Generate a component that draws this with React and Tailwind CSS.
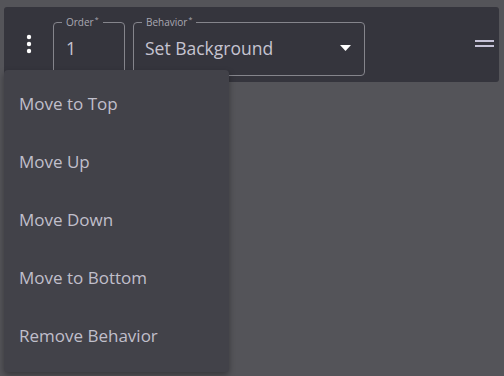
import React from 'react';

const menuItems = ['Move to Top', 'Move Up', 'Move Down', 'Move to Bottom', 'Remove Behavior'];

const font = { fontFamily: '"Open Sans", "Liberation Sans", sans-serif' };

const App = () => {
    return (
        <div className="relative w-[504px] h-[376px] overflow-hidden bg-[#545459] pt-[7px] pl-[4px]" style={font}>
            {/* behavior row */}
            <div className="flex items-start w-[495px] h-[75px] rounded-[3px] bg-[#35353d]">
                <div className="w-[49px] h-full flex items-center justify-center pb-[1px]">
                    <svg width="6" height="20" viewBox="0 0 6 20">
                        <circle cx="3" cy="3" r="2.2" fill="#ffffff" />
                        <circle cx="3" cy="10" r="2.2" fill="#ffffff" />
                        <circle cx="3" cy="17" r="2.2" fill="#ffffff" />
                    </svg>
                </div>
                <fieldset className="mt-[9px] w-[72px] h-[60px] border border-[#85858c] rounded-[4px] p-0 m-0">
                    <legend className="ml-[8px] px-[4px] text-[10px] leading-[12px] text-[#a9a8b2]">Order<sup className="text-[7px] ml-[1px] top-[-4px]">*</sup></legend>
                    <div className="h-[40px] pl-[12px] flex items-center text-[17.5px] text-[#c6c4d1]">1</div>
                </fieldset>
                <fieldset className="mt-[9px] ml-[8px] w-[232px] h-[60px] border border-[#85858c] rounded-[4px] p-0 m-0">
                    <legend className="ml-[8px] px-[4px] text-[10px] leading-[12px] text-[#a9a8b2]">Behavior<sup className="text-[7px] ml-[1px] top-[-4px]">*</sup></legend>
                    <div className="h-[40px] pl-[11px] pr-[13px] flex items-center justify-between text-[17.5px] text-[#c6c4d1]">
                        <span>Set Background</span>
                        <svg width="11" height="6" viewBox="0 0 11 6">
                            <path d="M0 0 L11 0 L5.5 6 Z" fill="#ffffff" />
                        </svg>
                    </div>
                </fieldset>
                <div className="flex-1 h-full flex items-center justify-end pr-[5px]">
                    <div className="flex flex-col gap-[3px] mb-[3px]">
                        <div className="w-[19px] h-[2px] bg-[#c6c3d8]" />
                        <div className="w-[19px] h-[2px] bg-[#c6c3d8]" />
                    </div>
                </div>
            </div>

            {/* action menu */}
            <div className="absolute left-[4px] top-[70px] w-[225px] h-[302px] pt-[5px] rounded-[4px] bg-[#424249] shadow-[0_3px_6px_rgba(0,0,0,0.35)]">
                {menuItems.map(item => (
                    <div key={item} className="h-[58px] flex items-center pl-[15px] text-[17px] text-[#c0bfcb]">
                        {item}
                    </div>
                ))}
            </div>
        </div>
    );
};

export default App;
